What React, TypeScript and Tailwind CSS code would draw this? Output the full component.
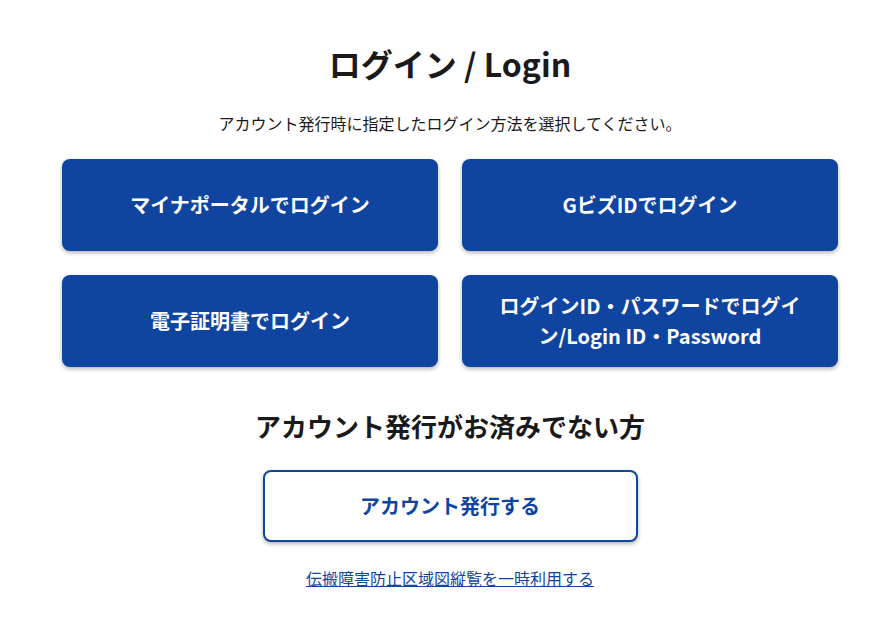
import React from "react"

const font = { fontFamily: '"Noto Sans CJK JP", "Noto Sans", sans-serif' }

type LoginButtonProps = {
  label: React.ReactNode
}

const LoginButton: React.FC<LoginButtonProps> = ({ label }) => {
  return (
    <button className="flex h-[92px] w-full items-center justify-center rounded-lg bg-[#0f45a1] px-8 text-center text-[20px] font-bold leading-[30px] text-white shadow-[0_2px_4px_rgba(0,0,0,0.3)]">
      {label}
    </button>
  )
}

export default function App() {
  return (
    <div className="min-h-[618px] bg-white text-[#1a1a1a]" style={font}>
      <div className="mx-auto flex w-[776px] translate-x-[4px] flex-col items-center pt-[39px]">
        <h1 className="text-[32px] font-bold leading-[48px]">ログイン / Login</h1>
        <p className="mt-[24px] text-[16px] leading-[24px]">
          アカウント発行時に指定したログイン方法を選択してください。
        </p>
        <div className="mt-[24px] grid w-full grid-cols-2 gap-x-[24px] gap-y-[24px]">
          <LoginButton label="マイナポータルでログイン" />
          <LoginButton label="GビズIDでログイン" />
          <LoginButton label="電子証明書でログイン" />
          <LoginButton
            label={
              <span>
                ログインID・パスワードでログイ
                <br />
                ン/Login ID・Password
              </span>
            }
          />
        </div>
        <h2 className="mt-[39px] text-[26px] font-bold leading-[40px]">
          アカウント発行がお済みでない方
        </h2>
        <button className="mt-[24px] flex h-[72px] w-[375px] items-center justify-center rounded-lg border-2 border-[#0f45a1] bg-white text-[20px] font-bold text-[#0f45a1] shadow-[0_2px_4px_rgba(0,0,0,0.3)]">
          アカウント発行する
        </button>
        <a href="#" className="mt-[24px] text-[16px] leading-[24px] text-[#0f45a1] underline">
          伝搬障害防止区域図縦覧を一時利用する
        </a>
      </div>
    </div>
  )
}
